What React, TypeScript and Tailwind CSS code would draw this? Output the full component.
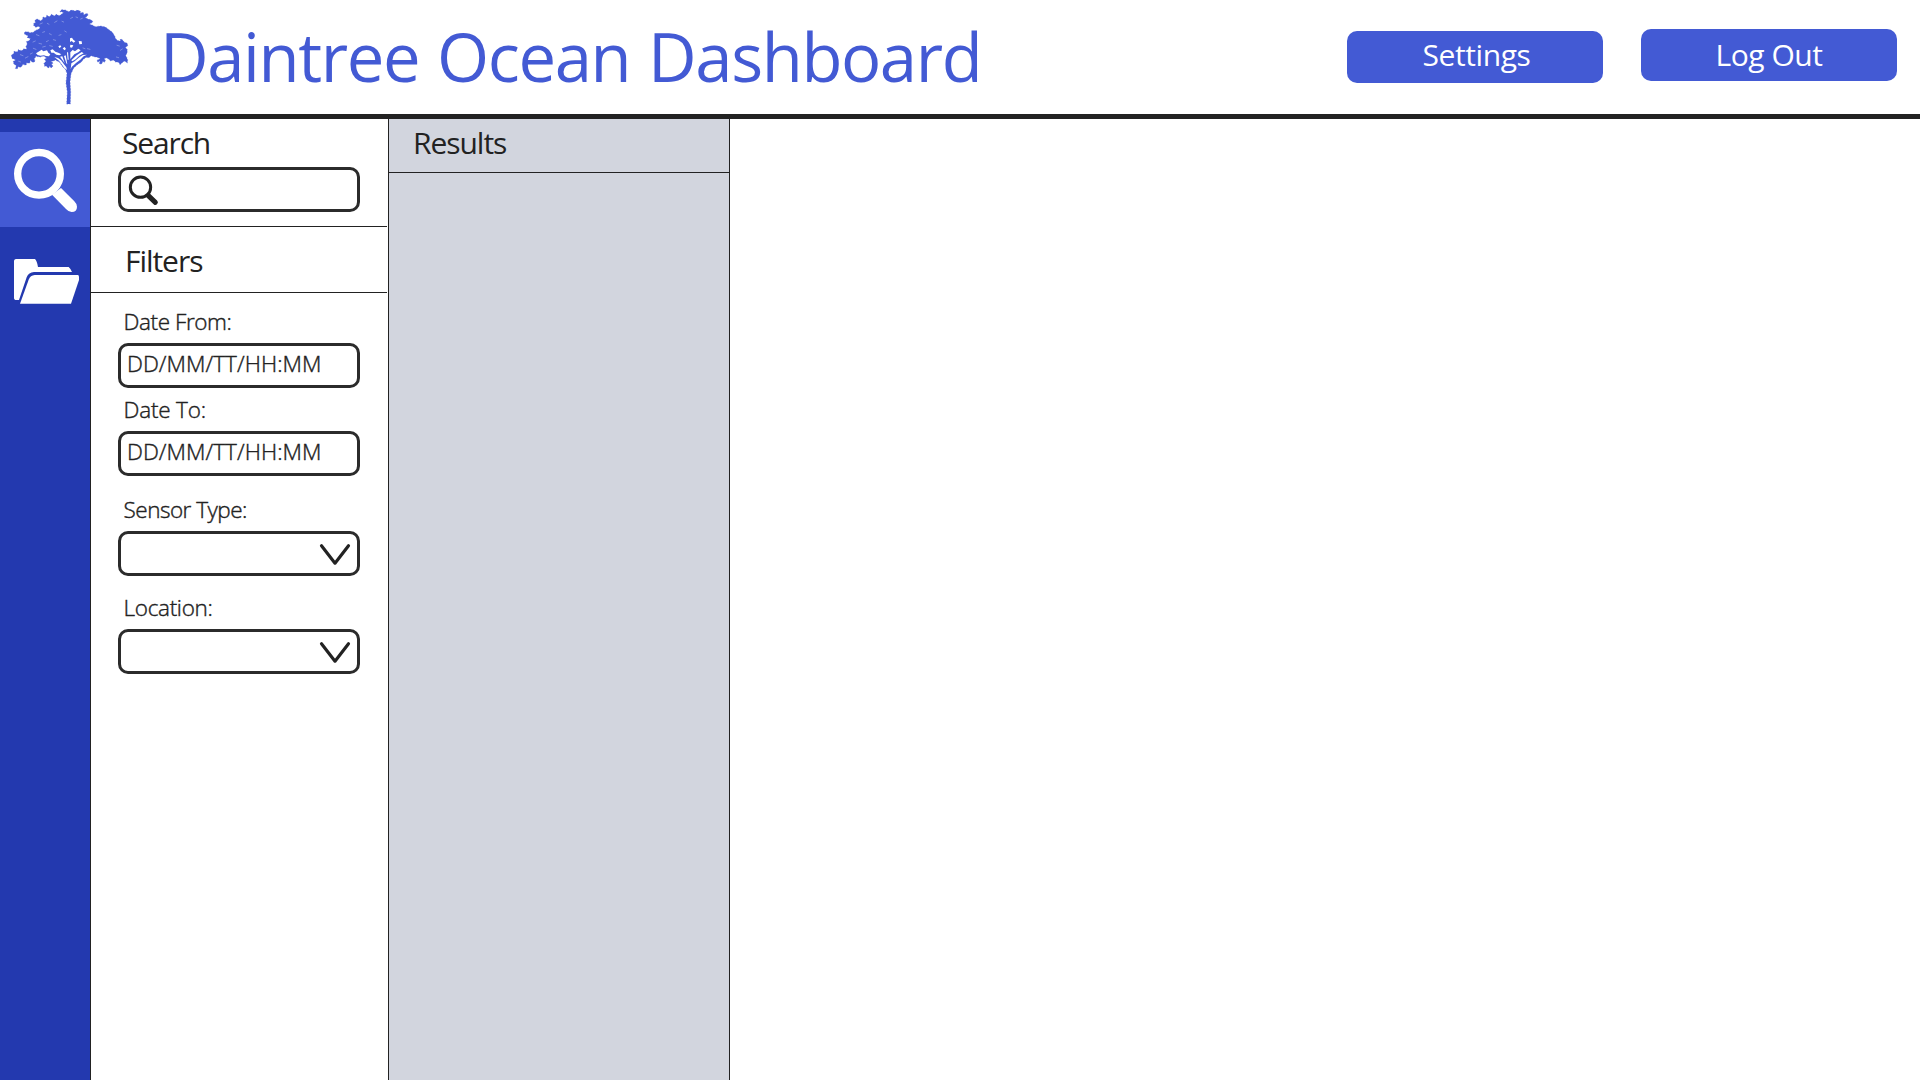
import type { ReactNode } from 'react';

function TreeLogo() {
  return (
    <svg viewBox="0 0 420 342" className="h-[114px] w-[140px] shrink-0 text-[#435ad4]" fill="currentColor" aria-hidden="true">
      <path stroke="currentColor" strokeOpacity=".5" strokeWidth="3" strokeDasharray="4 5" d="M180 36 L184 29 L196 30 L206 35 L214 30 L226 33 L232 30 L242 34 L240 40 L250 37 L251 44 L262 40 L264 46 L256 53 L266 58 L273 59 L279 65 L273 70 L268 72 L278 76 L286 80 L302 78 L316 81 L327 89 L337 97 L344 108 L347 116 L354 122 L362 123 L360 117 L367 119 L373 127 L382 130 L383 138 L376 142 L382 149 L381 160 L377 166 L383 179 L382 189 L374 183 L368 187 L360 194 L356 187 L347 186 L340 180 L332 183 L326 177 L318 173 L312 177 L317 181 L313 187 L308 184 L306 191 L298 192 L300 184 L292 186 L292 180 L301 176 L292 172 L282 170 L274 167 L266 173 L259 172 L250 178 L244 186 L232 194 L221 204 L213 221 L210 245 L212 275 L211 312 L200 312 L202 276 L198 248 L201 220 L196 208 L188 200 L179 187 L166 180 L158 184 L152 184 L160 190 L154 192 L159 198 L154 204 L149 199 L145 205 L139 198 L134 199 L132 190 L138 184 L133 178 L140 174 L131 168 L120 171 L108 169 L103 176 L105 185 L97 187 L91 181 L89 190 L80 188 L78 196 L69 193 L63 202 L54 200 L52 207 L46 205 L49 197 L41 191 L40 184 L47 180 L36 175 L34 165 L41 161 L42 154 L52 156 L55 149 L65 152 L72 146 L80 148 L78 139 L82 132 L79 125 L89 121 L91 115 L82 114 L84 107 L74 103 L73 96 L83 95 L90 98 L100 97 L105 92 L112 89 L120 85 L117 79 L107 82 L101 76 L101 70 L106 69 L105 60 L112 57 L121 62 L127 59 L129 51 L138 53 L140 46 L149 50 L154 43 L164 48 L168 43 L178 47 L184 43 L191 38 L184 35Z" />
      <g fill="white">
        <path d="M119 153 L125 149 L130 154 L141 151 L145 158 L151 163 L147 169 L138 168 L132 166 L121 167 L113 165 L108 160Z" />
        <path d="M151 151 L158 148 L166 155 L175 158 L184 163 L178 166 L169 164 L161 158 L154 158Z" />
        <path d="M211 157 L218 150 L225 154 L235 146 L242 151 L235 157 L223 163 L211 177Z" />
        <path d="M214 181 L230 166 L245 156 L251 160 L238 167 L227 178 L217 184Z" />
        <path d="M214 190 L224 184 L238 172 L249 165 L261 164 L251 169 L241 179 L228 189 L215 201 L212 208Z" />
        <path d="M163 171 L174 174 L183 181 L193 194 L199 202 L201 210 L193 204 L185 193 L177 182Z" />
        <path d="M180 170 L187 169 L194 190 L190 184Z" />
        <path d="M192 168 L197 166 L202 193 L199 190Z" />
        <path d="M201 158 L204 155 L206 179 L203 179Z" />
        <path d="M210 115 L216 113 L220 119 L226 124 L221 128 L215 123 L210 126Z" />
        <path d="M211 134 L220 136 L216 143 L210 142Z M236 123 L245 124 L246 132 L238 133Z" />
        <path d="M188 145 L194 141 L198 147 L193 151Z M175 139 L181 136 L184 140 L178 144Z" />
      </g>
      <g fill="none" stroke="white" strokeLinecap="round" strokeWidth="2.4" opacity=".38">
        <path d="M120 72 l7 -3 M142 70 l5 3 M164 67 l7 -4 M186 64 l5 2 M212 55 l6 -3 M228 51 l5 2 M242 57 l5 -2" />
        <path d="M109 104 l8 3 M128 97 l6 -2 M148 101 l6 3 M99 126 l7 -3 M117 130 l8 2 M139 125 l6 -3 M160 119 l7 2 M177 106 l6 -2 M194 93 l5 3" />
        <path d="M61 164 l8 3 M76 174 l8 -4 M91 162 l6 -3 M56 184 l6 2 M100 145 l8 3 M128 141 l8 -2 M149 137 l8 2" />
        <path d="M262 146 l8 2 M349 171 l7 2 M361 151 l6 -4 M351 136 l7 2 M249 144 l6 2" />
      </g>
    </svg>
  );
}

function HeaderButton({ children, className }: { children: ReactNode; className: string }) {
  return (
    <button className={`flex h-[52px] w-64 justify-center rounded-[10px] bg-[#435ad4] text-[30px] text-white ${className}`}>
      {children}
    </button>
  );
}

function Field({ label, gap, children, tracking }: { label: string; gap: string; tracking: string; children?: ReactNode }) {
  return (
    <div className={gap}>
      <div className={`h-[37px] pl-[5.5px] text-[22.5px] leading-[32px] font-light [-webkit-text-stroke:0.4px_#222] ${tracking}`}>{label}</div>
      <div className="flex h-[45px] w-[242px] rounded-[10px] border-3 border-[#2b2b2b]">{children}</div>
    </div>
  );
}

function DateValue() {
  return <span className="pl-[6px] text-[22.5px] leading-[35px] font-light tracking-[0.05px] [-webkit-text-stroke:0.4px_#222]">DD/MM/TT/HH:MM</span>;
}

function Chevron() {
  return (
    <svg viewBox="714 132 117 117" className="ml-auto size-[39px]" fill="none" stroke="#222" strokeWidth="9.5" strokeLinecap="round" strokeLinejoin="round" aria-hidden="true">
      <path d="M724.500 167 L765 219.500 L805.500 167" />
    </svg>
  );
}

export default function App() {
  return (
    <div className="flex h-[1080px] w-[1920px] flex-col overflow-hidden bg-white font-['Open_Sans',sans-serif] text-[#222]">
      <header className="flex h-[119px] shrink-0 border-b-5 border-[#222]">
        <TreeLogo />
        <h1 className="ml-5 text-[67px] leading-[112px] tracking-[-1.4px] [word-spacing:1.9px] whitespace-nowrap text-[#435ad4]">Daintree Ocean Dashboard</h1>
        <div className="mr-[23px] ml-auto flex gap-[38px]">
          <HeaderButton className="mt-[31px] pl-[3px] leading-[48px] tracking-[-0.4px]">Settings</HeaderButton>
          <HeaderButton className="mt-[29px] leading-[52px] tracking-[-0.45px]">Log Out</HeaderButton>
        </div>
      </header>

      <div className="flex min-h-0 flex-1">
        <nav className="w-[91px] border-r border-[#222] bg-[#2339af] pt-[13px]">
          <button className="block h-[95px] w-[90px] bg-[#435ad4]" aria-label="Search">
            <svg viewBox="0 66 270 285" className="h-[95px] w-[90px]" fill="white">
              <circle cx="117" cy="191.500" r="64" fill="none" stroke="white" strokeWidth="22" />
              <path d="M156 254 L198 297 Q206 306 215 306 Q231 306 231 290 Q231 282 223 274 L183 234Z" />
            </svg>
          </button>
          <button className="block h-[95px] w-[90px]" aria-label="Files">
            <svg viewBox="0 351 270 285" className="h-[95px] w-[90px]" fill="white">
              <path d="M42 452 Q43 447 48 447 H105 Q111 453 114 471 H206 Q212 476 216 486 H102 Q86 487 80 502 L57 570 H46 Q42 569 42 565Z" />
              <path d="M104 495 H235 Q238 498 237 510 L213 581 H60 L86 509 Q91 496 104 495Z" />
            </svg>
          </button>
        </nav>

        <aside className="w-[297px]">
          <section className="mr-px h-[108px] w-[296px] border-b border-[#222] pl-[27px]">
            <h2 className="h-12 pl-1 text-[30px] leading-[47px] tracking-[-1.15px]">Search</h2>
            <div className="flex h-[45px] w-[242px] rounded-[10px] border-3 border-[#2b2b2b]">
              <svg viewBox="363 195 117 117" className="size-[39px]" fill="none" stroke="#222" aria-hidden="true">
                <circle cx="421.500" cy="246.500" r="30.500" strokeWidth="9" />
                <path d="M445 272 L466 292" strokeWidth="15" strokeLinecap="round" />
              </svg>
            </div>
          </section>
          <h2 className="h-[66px] w-[296px] border-b border-[#222] pl-[34px] text-[30px] leading-[67px] tracking-[-1.05px]">Filters</h2>
          <div className="pl-[27px]">
            <Field label="Date From:" gap="pt-[13px]" tracking="tracking-[-0.4px]"><DateValue /></Field>
            <Field label="Date To:" gap="pt-[6px]" tracking="tracking-[-0.2px]"><DateValue /></Field>
            <Field label="Sensor Type:" gap="pt-[18px]" tracking="tracking-[-0.5px]"><Chevron /></Field>
            <Field label="Location:" gap="pt-4" tracking="tracking-[-0.3px]"><Chevron /></Field>
          </div>
        </aside>

        <section className="w-[342px] border-x border-[#222] bg-[#d2d5de]">
          <h2 className="h-[54px] border-b border-[#222] pl-6 text-[30px] leading-[47px] tracking-[-1.05px]">Results</h2>
        </section>
        <main className="flex-1 bg-white" />
      </div>
    </div>
  );
}
